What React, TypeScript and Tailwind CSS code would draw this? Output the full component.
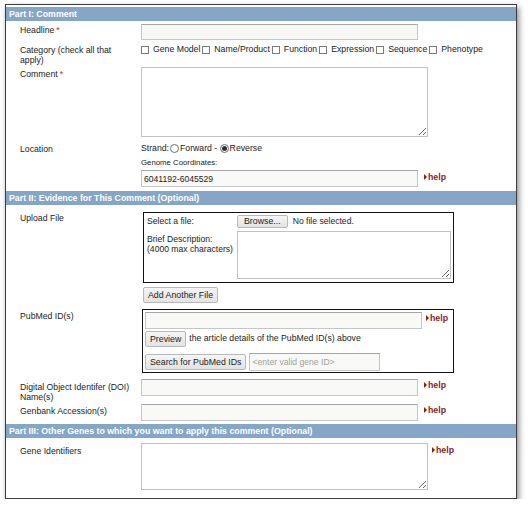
import React from 'react';

// Comment form for a gene page, three parts inside a framed panel
const font = "font-['Liberation_Sans',Arial,sans-serif]";

const Help: React.FC<{ className?: string }> = ({ className = '' }) => (
    <span className={`flex items-center text-[8.8px] font-bold text-[#8a1c1c] leading-none ${className}`}>
        <svg width="3" height="6" viewBox="0 0 3 6" className="mr-[1px]">
            <path d="M0 0 L3 3 L0 6 Z" fill="#8a1c1c" />
        </svg>
        help
    </span>
);

const SectionHeader: React.FC<{ title: string }> = ({ title }) => (
    <div className="h-[14px] bg-[#85a6c7] pl-[3px] text-[8.8px] font-bold leading-[14px] text-white">
        {title}
    </div>
);

const Req = () => <span className="text-[#d22] ml-[2px]">*</span>;

const Label: React.FC<{ children: React.ReactNode; className?: string }> = ({ children, className = '' }) => (
    <div className={`w-[135px] shrink-0 pl-[14px] leading-[10px] ${className}`}>{children}</div>
);

const inputCls =
    'block bg-[#f7f7f5] border border-[#c6c6c6] border-t-[#a5a5a5] outline-none px-[2px] text-[8.6px] text-[#222]';

const Button: React.FC<{ children: React.ReactNode; className?: string }> = ({ children, className = '' }) => (
    <button className={`bg-gradient-to-b from-[#f6f6f6] to-[#e2e2e2] border border-[#b9b9b9] rounded-[2px] px-[4px] text-[8.8px] text-[#222] leading-none ${className}`}>
        {children}
    </button>
);

const Checkbox: React.FC<{ label: string }> = ({ label }) => (
    <span className="flex items-center mr-[2px]">
        <span className="w-[8px] h-[8px] border border-[#7a7a7a] bg-white mr-[4px]"></span>
        <span>{label}</span>
    </span>
);

const Radio: React.FC<{ checked?: boolean }> = ({ checked }) => (
    <span className="w-[9px] h-[9px] rounded-full border border-[#707070] bg-white flex items-center justify-center">
        {checked && <span className="w-[5px] h-[5px] rounded-full bg-[#333]"></span>}
    </span>
);

export default function App() {
    const categories = ['Gene Model', 'Name/Product', 'Function', 'Expression', 'Sequence', 'Phenotype'];

    return (
        <div className={`pl-[5px] pt-[4px] ${font} text-[8.7px] text-[#222]`}>
            <div className="w-[512px] border border-[#3c3c3c] bg-white pt-[2px] pb-[8px] shadow-[2px_3px_6px_rgba(0,0,0,0.45)]">
                {/* Part I */}
                <SectionHeader title="Part I: Comment" />

                <div className="flex mt-[3px]">
                    <Label className="pt-[1px]">Headline<Req /></Label>
                    <input className={`${inputCls} w-[277px] h-[16px]`} />
                </div>

                <div className="flex mt-[5px]">
                    <Label>Category (check all that<br />apply)</Label>
                    <div className="flex items-center h-[10px] text-[8.7px]">
                        {categories.map((c) => (
                            <Checkbox key={c} label={c} />
                        ))}
                    </div>
                </div>

                <div className="flex mt-[2px]">
                    <Label className="pt-[2px]">Comment<Req /></Label>
                    <textarea className="block w-[287px] h-[70px] border border-[#c2c2c2] bg-white outline-none" />
                </div>

                <div className="flex mt-[6px]">
                    <Label className="pt-[1px]">Location</Label>
                    <div>
                        <div className="flex items-center h-[11px]">
                            <span className="mr-[1px]">Strand:</span>
                            <Radio />
                            <span className="ml-[1px]">Forward -&nbsp;</span>
                            <Radio checked />
                            <span className="ml-[1px]">Reverse</span>
                        </div>
                        <div className="text-[7.8px] leading-[10px] mt-[4px] mb-[2px]">Genome Coordinates:</div>
                        <div className="flex items-start">
                            <input className={`${inputCls} w-[277px] h-[17px] bg-[#f9f9f7]`} defaultValue="6041192-6045529" />
                            <Help className="ml-[6px] mt-[3px]" />
                        </div>
                    </div>
                </div>

                {/* Part II */}
                <div className="mt-[4px]">
                    <SectionHeader title="Part II: Evidence for This Comment (Optional)" />
                </div>

                <div className="flex mt-[7px]">
                    <Label className="pt-[1px]">Upload File</Label>
                    <div className="ml-[2px]">
                        <div className="w-[311px] h-[71px] border border-[#111] pl-[3px] pt-[2px]">
                            <div className="flex items-center">
                                <div className="w-[90px] text-[8.6px]">Select a file:</div>
                                <Button className="h-[13px] px-[6px]">Browse...</Button>
                                <span className="ml-[5px] text-[8.6px]">No file selected.</span>
                            </div>
                            <div className="flex mt-[3px]">
                                <div className="w-[90px] text-[8.6px] leading-[10px] pt-[3px]">
                                    Brief Description:<br />(4000 max characters)
                                </div>
                                <textarea className="block w-[214px] h-[48px] border border-[#c2c2c2] bg-white outline-none" />
                            </div>
                        </div>
                        <Button className="h-[16px] mt-[4px]">Add Another File</Button>
                    </div>
                </div>

                <div className="flex mt-[6px]">
                    <Label className="pt-[2px]">PubMed ID(s)</Label>
                    <div className="ml-[1px] w-[312px] h-[64px] border border-[#111] pl-[2px] pt-[2px]">
                        <div className="flex items-start">
                            <input className={`${inputCls} w-[277px] h-[17px] bg-[#f9f9f7]`} />
                            <Help className="ml-[4px] mt-[2px]" />
                        </div>
                        <div className="flex items-center mt-[2px]">
                            <Button className="h-[16px]">Preview</Button>
                            <span className="ml-[3px]">the article details of the PubMed ID(s) above</span>
                        </div>
                        <div className="flex items-center mt-[6px]">
                            <Button className="h-[16px]">Search for PubMed IDs</Button>
                            <input
                                className={`${inputCls} ml-[3px] w-[131px] h-[18px] bg-[#f9f9f7] placeholder:text-[#a0a0a0] border-[#c6c6c6]`}
                                placeholder="<enter valid gene ID>"
                            />
                        </div>
                    </div>
                </div>

                <div className="flex mt-[6px]">
                    <Label className="pt-[3px] h-[17px]">Digital Object Identifer (DOI)<br />Name(s)</Label>
                    <div className="flex items-start">
                        <input className={`${inputCls} w-[277px] h-[17px] bg-[#f9f9f7]`} />
                        <Help className="ml-[6px] mt-[2px]" />
                    </div>
                </div>

                <div className="flex mt-[8px]">
                    <Label className="pt-[2px]">Genbank Accession(s)</Label>
                    <div className="flex items-start">
                        <input className={`${inputCls} w-[277px] h-[17px] bg-[#f9f9f7]`} />
                        <Help className="ml-[6px] mt-[2px]" />
                    </div>
                </div>

                {/* Part III */}
                <div className="mt-[3px]">
                    <SectionHeader title="Part III: Other Genes to which you want to apply this comment (Optional)" />
                </div>

                <div className="flex mt-[5px]">
                    <Label className="pt-[3px]">Gene Identifiers</Label>
                    <div className="flex items-start">
                        <textarea className="block w-[287px] h-[47px] border border-[#c2c2c2] bg-white outline-none" />
                        <Help className="ml-[4px] mt-[3px]" />
                    </div>
                </div>
            </div>
        </div>
    );
}
